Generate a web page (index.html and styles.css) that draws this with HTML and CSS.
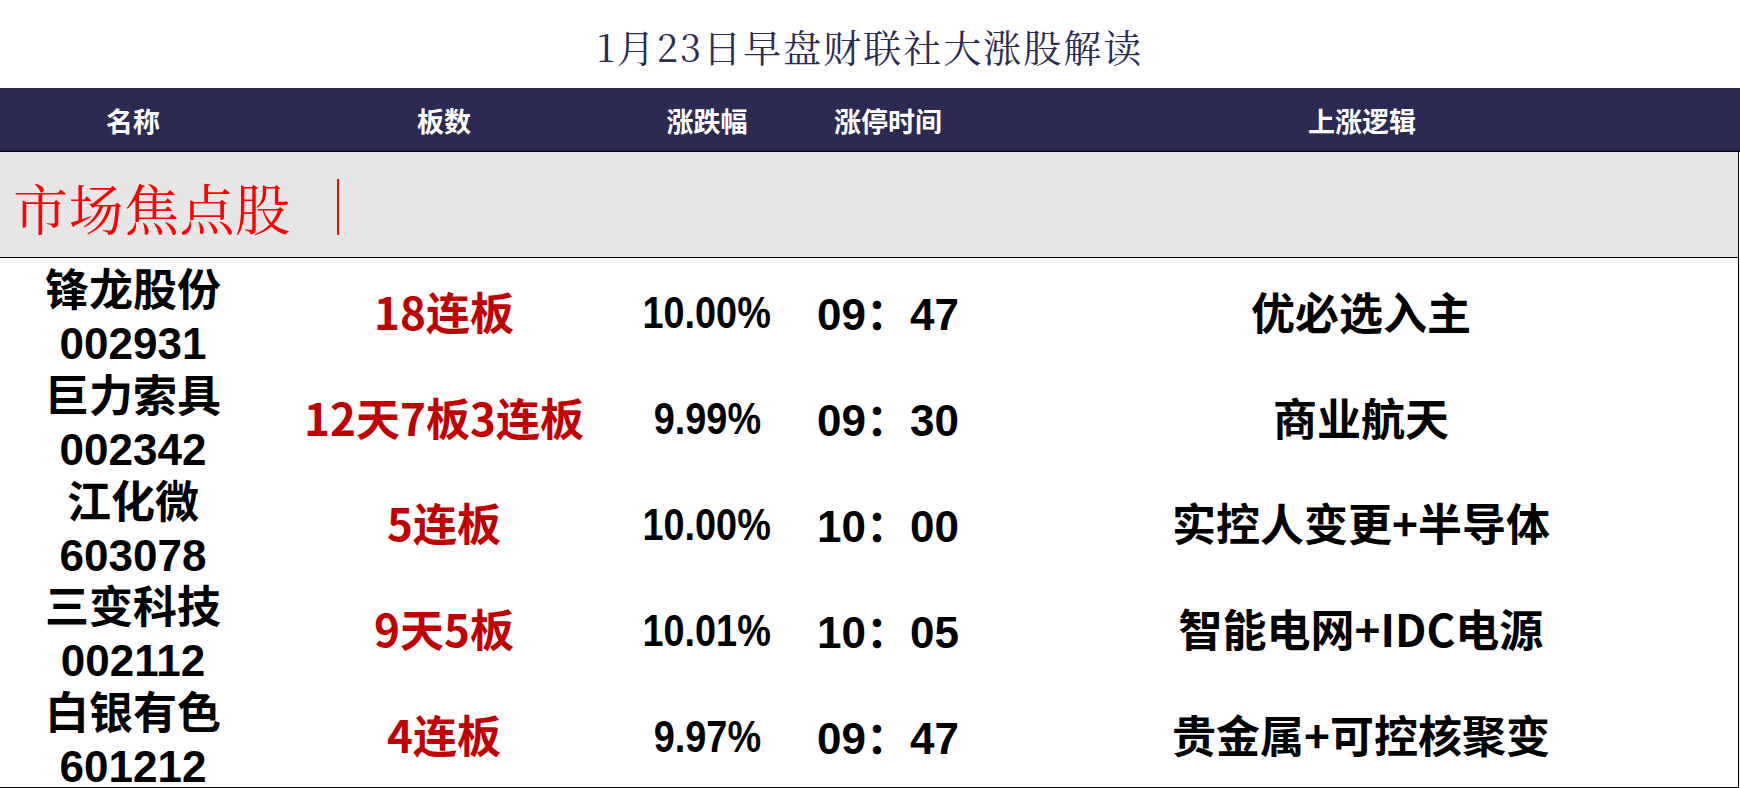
FILE: index.html
```html
<!DOCTYPE html>
<html lang="zh-CN">
<head>
<meta charset="utf-8">
<title>1月23日早盘财联社大涨股解读</title>
<link rel="stylesheet" href="styles.css">
</head>
<body>
<div class="page">
  <h1 class="title">1月23日早盘财联社大涨股解读</h1>
  <div class="table">
    <div class="head cols">
      <div>名称</div>
      <div>板数</div>
      <div>涨跌幅</div>
      <div>涨停时间</div>
      <div>上涨逻辑</div>
    </div>
    <div class="section">
      <span class="section-title">市场焦点股</span><span class="section-bar"></span>
    </div>
    <div class="rows">
      <div class="row cols">
        <div class="name"><span>锋龙股份</span><span>002931</span></div>
        <div class="boards">18连板</div>
        <div class="pct"><span>10.00%</span></div>
        <div class="time">09：47</div>
        <div class="logic">优必选入主</div>
      </div>
      <div class="row cols">
        <div class="name"><span>巨力索具</span><span>002342</span></div>
        <div class="boards">12天7板3连板</div>
        <div class="pct"><span>9.99%</span></div>
        <div class="time">09：30</div>
        <div class="logic">商业航天</div>
      </div>
      <div class="row cols">
        <div class="name"><span>江化微</span><span>603078</span></div>
        <div class="boards">5连板</div>
        <div class="pct"><span>10.00%</span></div>
        <div class="time">10：00</div>
        <div class="logic">实控人变更+半导体</div>
      </div>
      <div class="row cols">
        <div class="name"><span>三变科技</span><span>002112</span></div>
        <div class="boards">9天5板</div>
        <div class="pct"><span>10.01%</span></div>
        <div class="time">10：05</div>
        <div class="logic">智能电网+IDC电源</div>
      </div>
      <div class="row cols">
        <div class="name"><span>白银有色</span><span>601212</span></div>
        <div class="boards">4连板</div>
        <div class="pct"><span>9.97%</span></div>
        <div class="time">09：47</div>
        <div class="logic">贵金属+可控核聚变</div>
      </div>
    </div>
  </div>
</div>
</body>
</html>
```

FILE: styles.css
```css
* { box-sizing: border-box; }

html, body {
  margin: 0;
  padding: 0;
  background: #ffffff;
}

body {
  width: 1740px;
  height: 788px;
  overflow: hidden;
  font-family: "Liberation Sans", "Noto Sans CJK SC", sans-serif;
}

.page {
  display: flex;
  flex-direction: column;
}

.title {
  margin: 0;
  height: 88px;
  display: flex;
  align-items: center;
  justify-content: center;
  padding-top: 2px;
  font-family: "Noto Serif CJK SC", "Noto Sans CJK SC", serif;
  font-weight: normal;
  font-size: 38px;
  letter-spacing: 2px;
  color: #2b2a52;
}

.table {
  display: flex;
  flex-direction: column;
}

.cols {
  display: grid;
  grid-template-columns: 266px 356px 170px 192px 1fr;
  text-align: center;
}

.head {
  height: 64px;
  background: #2c2a52;
  border-bottom: 1px solid #000;
  color: #ffffff;
  font-family: "Noto Sans CJK SC", sans-serif;
  font-size: 27px;
  font-weight: bold;
  align-items: center;
  padding-top: 1px;
}

.section {
  height: 106px;
  background: #e7e6e6;
  border-bottom: 1px solid #000;
  border-right: 1px solid #000;
  margin-right: 1px;
  display: flex;
  align-items: center;
  padding-left: 13px;
  padding-top: 4px;
}

.section-title {
  font-family: "Noto Serif CJK SC", "Noto Sans CJK SC", serif;
  font-weight: normal;
  font-size: 55px;
  color: #ff0000;
  letter-spacing: 0.5px;
}

.section-bar {
  display: inline-block;
  width: 2px;
  height: 56px;
  background: #ff0000;
  margin-left: 46px;
}

.rows {
  height: 530px;
  display: grid;
  grid-template-rows: repeat(5, minmax(0, 1fr));
  border-bottom: 1px solid #000;
  border-right: 1px solid #000;
  margin-right: 1px;
}

.row {
  align-items: center;
  font-size: 44px;
  font-weight: bold;
  color: #000;
  min-height: 0;
}

.name {
  align-self: stretch;
  display: flex;
  flex-direction: column;
  align-items: center;
}

.name span:first-child {
  font-family: "Noto Sans CJK SC", sans-serif;
  line-height: 40px;
  margin-top: 9px;
}

.name span:last-child {
  line-height: 36px;
  margin-top: 19px;
}

.boards {
  color: #c00000;
  font-family: "Noto Sans CJK SC", sans-serif;
}

.pct {
  padding-top: 5px;
}

.pct span {
  display: inline-block;
  transform: scaleX(0.86);
}

.time {
  font-family: "Liberation Sans", "Noto Sans CJK SC", sans-serif;
  padding-top: 1px;
}

.logic {
  font-family: "Noto Sans CJK SC", sans-serif;
}
```
